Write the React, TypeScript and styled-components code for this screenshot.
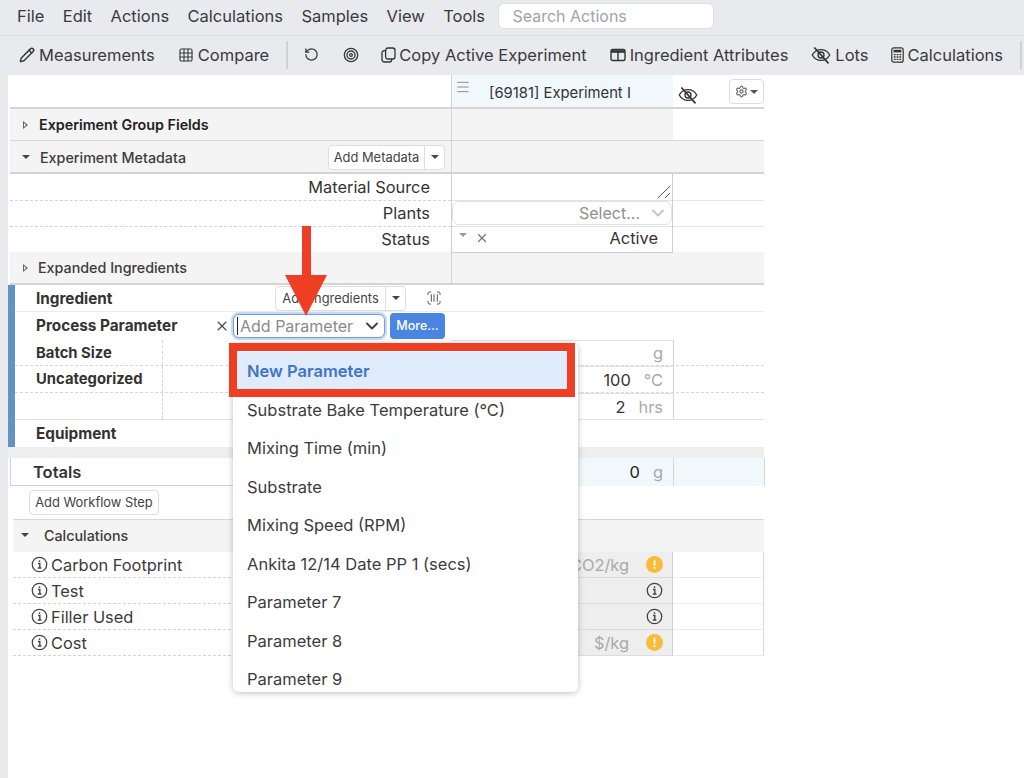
import React from 'react';
import styled, { createGlobalStyle } from 'styled-components';
import {
  ChevronDown,
  Grid3x3,
  Menu,
  Pencil,
  RotateCcw,
  ScanBarcode,
  Settings,
  Target,
  X,
} from 'lucide-react';

const GlobalStyle = createGlobalStyle`
  html, body {
    margin: 0;
    padding: 0;
    background: #fff;
    font-family: Inter, "Liberation Sans", sans-serif;
    color: #333;
  }
  * { box-sizing: border-box; }
`;

//Page frame
const Page = styled.div`
  position: relative;
  width: 1024px;
  height: 778px;
  overflow: hidden;
`;

const MenuBar = styled.div`
  height: 36px;
  background: #e9eaee;
  border-bottom: 1px solid #dddee2;
  display: flex;
  align-items: center;
  padding: 0 0 3px 17px;
  gap: 18.4px;
  font-size: 16.5px;
  color: #3a3a3c;
`;

const SearchBox = styled.div`
  width: 216px;
  height: 26px;
  margin-left: -5px;
  background: #fff;
  border: 1px solid #dfe0e3;
  border-radius: 6px;
  color: #a3a3a6;
  font-size: 16px;
  line-height: 24px;
  padding-left: 13px;
`;

const Toolbar = styled.div`
  height: 39px;
  padding-bottom: 2px;
  background: #e9eaee;
  display: flex;
  align-items: center;
  font-size: 16.5px;
  color: #3a3a3c;
`;

const ToolItem = styled.div<{ $left: number; $gap?: number }>`
  display: flex;
  align-items: center;
  gap: ${(p) => p.$gap ?? 4}px;
  margin-left: ${(p) => p.$left}px;
  white-space: nowrap;
`;

const ToolDivider = styled.div<{ $left: number }>`
  width: 2px;
  height: 28px;
  background: #cfd0d4;
  margin-left: ${(p) => p.$left}px;
`;

const Body = styled.div`
  display: flex;
  height: 703px;
`;

const LeftStrip = styled.div`
  width: 8px;
  background: #e9eaee;
`;

const Sheet = styled.div`
  width: 756px;
  display: flex;
  flex-direction: column;
`;

//Rows of the sheet
const Row = styled.div<{ $h: number; $line?: string }>`
  display: grid;
  grid-template-columns: 441px 222px 91px;
  margin-left: 2px;
  height: ${(p) => p.$h}px;
  border-bottom: ${(p) => p.$line || '1px solid #d6d6d6'};
`;

const GroupCell = styled.div<{ $gray?: boolean; $divider?: boolean; $top?: boolean; $drop?: number }>`
  display: flex;
  align-items: center;
  background: ${(p) => (p.$gray ? '#f4f4f4' : 'transparent')};
  border-left: ${(p) => (p.$divider ? '1px solid #d3d3d3' : 'none')};
  border-top: ${(p) => (p.$top ? '1px solid #d8d8d8' : 'none')};
  padding-bottom: ${(p) => (p.$top ? 2 : 0)}px;
  padding-top: ${(p) => p.$drop || 0}px;
`;

const HeaderExperiment = styled.div`
  display: flex;
  align-items: center;
  background: #f0f8fc;
  border-left: 1px solid #d3d3d3;
  font-size: 14.8px;
  color: #333;
  position: relative;
  padding: 3px 0 0 37px;
`;

const DragHandle = styled.span`
  position: absolute;
  left: 3px;
  top: 4px;
  color: #8c8c8c;
  display: flex;
`;

const HeaderTools = styled.div`
  display: flex;
  align-items: center;
  padding-left: 5px;
  justify-content: space-between;
`;

const HeaderEye = styled.span`
  display: flex;
  margin-top: 7px;
`;

const GearButton = styled.div`
  width: 35px;
  height: 25px;
  margin-top: 1px;
  background: #fff;
  border: 1px solid #dcdcdc;
  border-radius: 4px;
  display: flex;
  align-items: center;
  justify-content: center;
  gap: 2px;
  color: #666;
`;

const Caret = styled.span<{ $color?: string }>`
  width: 0;
  height: 0;
  border-left: 4px solid transparent;
  border-right: 4px solid transparent;
  border-top: 4px solid ${(p) => p.$color || '#444'};
`;

const Triangle = styled.span`
  width: 0;
  height: 0;
  border-top: 4px solid transparent;
  border-bottom: 4px solid transparent;
  border-left: 5px solid #666;
  position: relative;
  &::after {
    content: '';
    position: absolute;
    left: -4px;
    top: -2px;
    border-top: 2px solid transparent;
    border-bottom: 2px solid transparent;
    border-left: 2.5px solid #f4f4f4;
  }
`;

const GroupTitle = styled.span<{ $weight?: number; $left: number }>`
  font-size: 14.3px;
  font-weight: ${(p) => p.$weight || 500};
  color: ${(p) => (p.$weight === 600 ? '#222' : '#3c3c3c')};
  margin-left: ${(p) => p.$left}px;
`;

const Disclosure = styled.span<{ $left: number }>`
  display: flex;
  margin-left: ${(p) => p.$left}px;
`;

const SplitButton = styled.div<{ $left?: number; $right?: number }>`
  display: flex;
  height: 25px;
  margin-left: ${(p) => (p.$left !== undefined ? `${p.$left}px` : 'auto')};
  margin-right: ${(p) => p.$right || 0}px;
  background: #fff;
  border: 1px solid #dedede;
  border-radius: 4px;
  font-size: 12.9px;
  color: #444;
`;

const SplitLabel = styled.span<{ $w: number }>`
  width: ${(p) => p.$w}px;
  display: flex;
  align-items: center;
  justify-content: center;
  white-space: nowrap;
  border-right: 1px solid #dedede;
`;

const SplitCaret = styled.span`
  flex: 1;
  display: flex;
  align-items: center;
  justify-content: center;
  width: 19px;
`;

const FieldLabel = styled.div`
  text-align: right;
  font-size: 16.4px;
  line-height: 26px;
  padding-right: 21px;
  color: #333;
  border-bottom: 1px dashed #d4d4d4;
`;

const FieldCell = styled.div<{ $last?: boolean }>`
  position: relative;
  border-left: 1px solid #cfcfcf;
  border-right: 1px solid #cfcfcf;
  border-bottom: 1px solid ${(p) => (p.$last ? '#cfcfcf' : '#e2e2e2')};
  display: flex;
  align-items: center;
  font-size: 16.4px;
`;

const FieldRest = styled.div`
  border-bottom: 1px solid #e6e6e6;
`;

const ResizeGrip = styled.svg`
  position: absolute;
  right: 1px;
  bottom: 1px;
`;

const SelectShell = styled.div`
  width: 221px;
  height: 24px;
  border: 1px solid #dfe3e8;
  border-radius: 7px;
  display: flex;
  align-items: center;
  justify-content: flex-end;
  gap: 8px;
  padding-right: 3px;
  font-size: 16px;
  color: #8f8f8f;
`;

const StatusValue = styled.span`
  margin-left: auto;
  margin-right: 14px;
  margin-top: -2px;
  color: #333;
`;

const StatusCaret = styled.span`
  margin: -8px 0 0 7px;
  display: flex;
`;

const StatusClear = styled.span`
  margin: -2px 0 0 8px;
  display: flex;
  color: #777;
`;

//Ingredient block with the blue bar
const IngredientBlock = styled.div`
  border-left: 7px solid #6293c6;
  height: 162px;
  display: flex;
  flex-direction: column;
`;

const PlainRow = styled.div<{ $h: number; $line?: string; $drop?: number }>`
  height: ${(p) => p.$h}px;
  display: flex;
  align-items: center;
  padding-left: 21px;
  padding-top: ${(p) => p.$drop || 0}px;
  border-bottom: 1px solid ${(p) => p.$line || '#ececec'};
`;

const BoldLabel = styled.span<{ $w?: number; $size?: number }>`
  font-size: ${(p) => p.$size || 15.3}px;
  font-weight: 700;
  color: #333;
  width: ${(p) => (p.$w ? `${p.$w}px` : 'auto')};
  flex-shrink: 0;
  white-space: nowrap;
`;

const ClearButton = styled.span`
  display: flex;
  flex-shrink: 0;
  color: #444;
  margin-left: -8px;
  margin-right: 3px;
`;

const ParamSelect = styled.div`
  width: 152px;
  height: 24px;
  border: 1px solid #6f9fe0;
  border-radius: 6px;
  box-shadow: 0 0 0 2px #c8daf3;
  display: flex;
  align-items: center;
  padding: 0 2px 0 3px;
  background: #fff;
  font-size: 16px;
  color: #8a8a8a;
`;

const TextCaret = styled.span`
  width: 1px;
  height: 18px;
  background: #222;
  margin-right: 2px;
`;

const ParamChevron = styled.span`
  margin-left: auto;
  display: flex;
  color: #444;
`;

const MoreButton = styled.div`
  width: 55px;
  height: 26px;
  margin-left: 5px;
  background: #4a86e0;
  border-radius: 4px;
  color: #fff;
  font-size: 12.5px;
  font-weight: 500;
  display: flex;
  align-items: center;
  justify-content: center;
`;

const ScanIcon = styled.span`
  display: flex;
  margin-left: 20px;
  color: #555;
`;

const DataRow = styled.div<{ $h: number; $solid?: boolean }>`
  height: ${(p) => p.$h}px;
  display: grid;
  grid-template-columns: 148px 288px 222px 91px;
  border-bottom: 1px ${(p) => (p.$solid ? 'solid #e2e2e2' : 'dashed #d8d8d8')};
`;

const DataLabel = styled.div`
  padding: 2px 0 0 21px;
  border-right: 1px dashed #d4d4d4;
`;

const DataValue = styled.div`
  display: flex;
  justify-content: flex-end;
  align-items: center;
  gap: 13px;
  padding-right: 10px;
  font-size: 16.4px;
  border-top: 1px solid #e2e2e2;
  color: #333;
`;

const Unit = styled.span`
  color: #a9a9a9;
`;

const DataRest = styled.div`
  border-left: 1px solid #d6d6d6;
`;

const SectionGap = styled.div`
  height: 11px;
  background: #eeeeee;
`;

const TotalsRow = styled.div`
  margin-left: 2px;
  height: 28px;
  display: grid;
  grid-template-columns: 441px 222px 91px;
  border-left: 1px solid #d6d6d6;
  border-bottom: 1px solid #d0d0d0;
`;

const TotalsLabel = styled.div`
  padding-left: 22px;
  font-size: 16.5px;
  font-weight: 600;
  line-height: 28px;
`;

const TotalsValue = styled(DataValue)`
  background: #f0f8fc;
  border-top: none;
  border-right: 1px solid #d6d6d6;
  color: #222;
  gap: 13px;
`;

const TotalsRest = styled.div`
  background: #f0f8fc;
  border-right: 1px solid #d6d6d6;
`;

const WorkflowRow = styled.div`
  height: 33px;
  padding: 4px 0 0 21px;
`;

const WorkflowButton = styled.div`
  width: 130px;
  height: 25px;
  border: 1px solid #dedede;
  border-radius: 4px;
  background: #fff;
  font-size: 12.9px;
  color: #444;
  display: flex;
  align-items: center;
  justify-content: center;
  white-space: nowrap;
`;

const CalcRow = styled.div<{ $h?: number }>`
  margin-left: 5px;
  height: ${(p) => p.$h || 26}px;
  display: grid;
  grid-template-columns: 438px 222px 91px;
`;

const CalcLabel = styled.div`
  display: flex;
  align-items: center;
  gap: 3px;
  padding: 0 0 0 18px;
  font-size: 16.4px;
  color: #3a3a3a;
  border-bottom: 1px dashed #d4d4d4;
`;

const CalcValue = styled.div`
  display: flex;
  justify-content: flex-end;
  align-items: center;
  gap: 17px;
  padding-right: 9px;
  background: #eeeeee;
  border-bottom: 1px solid #dcdcdc;
  border-right: 1px solid #d0d0d0;
  font-size: 16.4px;
  color: #a9a9a9;
`;

const CalcRest = styled.div`
  border-bottom: 1px solid #ececec;
  border-right: 1px solid #d8d8d8;
`;

//Dropdown and the annotation drawn over the page
const Dropdown = styled.div`
  position: absolute;
  left: 233px;
  top: 343px;
  width: 345px;
  height: 349px;
  padding-top: 9px;
  background: #fff;
  border-radius: 6px;
  box-shadow: 0 1px 6px rgba(0, 0, 0, 0.25);
  overflow: hidden;
`;

const DropdownItem = styled.div<{ $active?: boolean }>`
  height: 38.5px;
  margin-right: ${(p) => (p.$active ? 8 : 0)}px;
  padding-left: 14px;
  line-height: 38.5px;
  font-size: 16.5px;
  white-space: nowrap;
  font-weight: ${(p) => (p.$active ? 600 : 400)};
  color: ${(p) => (p.$active ? '#3f74c8' : '#3c3c3c')};
  background: ${(p) => (p.$active ? '#e0ebfb' : 'transparent')};
`;

const Highlight = styled.div`
  position: absolute;
  left: 229px;
  top: 343px;
  width: 346px;
  height: 54px;
  border: 8px solid #ee3f24;
`;

const ArrowMark = styled.svg`
  position: absolute;
  left: 285px;
  top: 226px;
`;

const EyeOff = ({ size }: { size: number }) => (
  <svg width={size} height={size} viewBox="0 0 24 24" fill="none" stroke="#333" strokeWidth="1.6">
    <path d="M1.5 12C4 7.5 8 5.5 12 5.5S20 7.5 22.5 12C20 16.5 16 18.5 12 18.5S4 16.5 1.5 12Z" />
    <circle cx="12" cy="12" r="3.6" />
    <path d="M4 3l17 19" strokeWidth="2" />
  </svg>
);

const CopyIcon = () => (
  <svg width="15" height="16" viewBox="0 0 15 16" fill="none" stroke="#333" strokeWidth="1.3">
    <rect x="4.6" y="1" width="9.4" height="11" rx="2.2" />
    <path d="M4.6 3.6H3.2A2.2 2.2 0 0 0 1 5.8v6.8A2.4 2.4 0 0 0 3.4 15h5.2a2 2 0 0 0 2-2v-1" />
  </svg>
);

const ColumnsIcon = () => (
  <svg width="16" height="16" viewBox="0 0 16 16" fill="none" stroke="#333" strokeWidth="1.4">
    <rect x="1" y="2.5" width="14" height="11" rx="1.5" />
    <path d="M1 4.5h14" strokeWidth="2.6" />
    <path d="M8 4v9.5" />
  </svg>
);

const CalcIcon = () => (
  <svg width="13" height="16" viewBox="0 0 13 16" fill="none" stroke="#333" strokeWidth="1.2">
    <rect x="0.8" y="0.8" width="11.4" height="14.4" rx="2" />
    <rect x="2.6" y="2.8" width="7.8" height="2.6" fill="#333" stroke="none" />
    <path d="M2.8 7.6h1.8M5.6 7.6h1.8M8.4 7.6h1.8M2.8 10h1.8M5.6 10h1.8M8.4 10h1.8M2.8 12.4h1.8M5.6 12.4h1.8M8.4 12.4h1.8" strokeWidth="1.3" />
  </svg>
);

const InfoIcon = () => (
  <svg width="17" height="17" viewBox="0 0 16 16" fill="none" stroke="#444" strokeWidth="1.2">
    <circle cx="8" cy="8" r="6.8" />
    <path d="M6.6 7h1.7v4.2M6.4 11.3h3.4" strokeWidth="1.3" />
    <circle cx="8" cy="4.8" r="0.9" fill="#444" stroke="none" />
  </svg>
);

const WarnIcon = () => (
  <svg width="17" height="17" viewBox="0 0 16 16">
    <circle cx="8" cy="8" r="8" fill="#f6bd3b" />
    <rect x="7.2" y="3.6" width="1.6" height="5.6" rx="0.8" fill="#fff" />
    <circle cx="8" cy="11.4" r="1" fill="#fff" />
  </svg>
);

const parameters = [
  'New Parameter',
  'Substrate Bake Temperature (°C)',
  'Mixing Time (min)',
  'Substrate',
  'Mixing Speed (RPM)',
  'Ankita 12/14 Date PP 1 (secs)',
  'Parameter 7',
  'Parameter 8',
  'Parameter 9',
];

const menus = ['File', 'Edit', 'Actions', 'Calculations', 'Samples', 'View', 'Tools'];

const App = () => {
  return (
    <Page>
      <GlobalStyle />

      <MenuBar>
        {menus.map((menu) => (
          <span key={menu}>{menu}</span>
        ))}
        <SearchBox>Search Actions</SearchBox>
      </MenuBar>

      <Toolbar>
        <ToolItem $left={19}>
          <Pencil size={16} strokeWidth={2.2} />
          Measurements
        </ToolItem>
        <ToolItem $left={23}>
          <Grid3x3 size={16} strokeWidth={1.7} />
          Compare
        </ToolItem>
        <ToolDivider $left={17} />
        <ToolItem $left={16}>
          <RotateCcw size={15} />
        </ToolItem>
        <ToolItem $left={24}>
          <Target size={16} />
        </ToolItem>
        <ToolItem $left={22} $gap={3}>
          <CopyIcon />
          Copy Active Experiment
        </ToolItem>
        <ToolItem $left={23}>
          <ColumnsIcon />
          Ingredient Attributes
        </ToolItem>
        <ToolItem $left={23}>
          <EyeOff size={20} />
          Lots
        </ToolItem>
        <ToolItem $left={22}>
          <CalcIcon />
          Calculations
        </ToolItem>
        <ToolDivider $left={17} />
      </Toolbar>

      <Body>
        <LeftStrip />
        <Sheet>
          <Row $h={34} $line="2px solid #d4d4d4">
            <div />
            <HeaderExperiment>
              <DragHandle>
                <Menu size={16} strokeWidth={1.5} />
              </DragHandle>
              [69181] Experiment I
            </HeaderExperiment>
            <HeaderTools>
              <HeaderEye>
                <EyeOff size={20} />
              </HeaderEye>
              <GearButton>
                <Settings size={13} />
                <Caret $color="#555" />
              </GearButton>
            </HeaderTools>
          </Row>

          <Row $h={32}>
            <GroupCell $gray>
              <Disclosure $left={13}>
                <Triangle />
              </Disclosure>
              <GroupTitle $weight={600} $left={11}>
                Experiment Group Fields
              </GroupTitle>
            </GroupCell>
            <GroupCell $gray $divider />
            <div />
          </Row>

          <Row $h={33} $line="2px solid #d4d4d4">
            <GroupCell $gray $drop={1}>
              <Disclosure $left={12}>
                <Caret />
              </Disclosure>
              <GroupTitle $left={10}>Experiment Metadata</GroupTitle>
              <SplitButton $right={6}>
                <SplitLabel $w={96}>Add Metadata</SplitLabel>
                <SplitCaret>
                  <Caret />
                </SplitCaret>
              </SplitButton>
            </GroupCell>
            <GroupCell $gray $divider />
            <GroupCell $gray />
          </Row>

          <Row $h={26} $line="none">
            <FieldLabel>Material Source</FieldLabel>
            <FieldCell>
              <ResizeGrip width="14" height="14" viewBox="0 0 14 14" stroke="#555" strokeWidth="1">
                <path d="M1 13L13 1M8 13l5-5" />
              </ResizeGrip>
            </FieldCell>
            <FieldRest />
          </Row>
          <Row $h={26} $line="none">
            <FieldLabel>Plants</FieldLabel>
            <FieldCell>
              <SelectShell>
                Select...
                <ChevronDown size={20} color="#c4c4c4" strokeWidth={2.4} />
              </SelectShell>
            </FieldCell>
            <FieldRest />
          </Row>
          <Row $h={26} $line="none">
            <FieldLabel>Status</FieldLabel>
            <FieldCell $last>
              <StatusCaret>
                <Caret $color="#999" />
              </StatusCaret>
              <StatusClear>
                <X size={14} strokeWidth={2.2} />
              </StatusClear>
              <StatusValue>Active</StatusValue>
            </FieldCell>
            <FieldRest />
          </Row>

          <Row $h={33} $line="2px solid #d4d4d4">
            <GroupCell $gray>
              <Disclosure $left={13}>
                <Triangle />
              </Disclosure>
              <GroupTitle $left={10}>Expanded Ingredients</GroupTitle>
            </GroupCell>
            <GroupCell $gray $divider />
            <GroupCell $gray />
          </Row>

          <IngredientBlock>
            <PlainRow $h={27}>
              <BoldLabel $w={239}>Ingredient</BoldLabel>
              <SplitButton $left={0}>
                <SplitLabel $w={110}>Add Ingredients</SplitLabel>
                <SplitCaret>
                  <Caret />
                </SplitCaret>
              </SplitButton>
              <ScanIcon>
                <ScanBarcode size={16} strokeWidth={1.5} />
              </ScanIcon>
            </PlainRow>
            <PlainRow $h={28} $line="transparent">
              <BoldLabel $w={186}>Process Parameter</BoldLabel>
              <ClearButton>
                <X size={16} strokeWidth={1.6} />
              </ClearButton>
              <ParamSelect>
                <TextCaret />
                Add Parameter
                <ParamChevron>
                  <ChevronDown size={20} strokeWidth={2.4} />
                </ParamChevron>
              </ParamSelect>
              <MoreButton>More...</MoreButton>
            </PlainRow>
            <DataRow $h={26}>
              <DataLabel>
                <BoldLabel $size={14.8}>Batch Size</BoldLabel>
              </DataLabel>
              <div />
              <DataValue>
                <Unit>g</Unit>
              </DataValue>
              <DataRest />
            </DataRow>
            <DataRow $h={27}>
              <DataLabel>
                <BoldLabel $size={14.8}>Uncategorized</BoldLabel>
              </DataLabel>
              <div />
              <DataValue>
                100
                <Unit>°C</Unit>
              </DataValue>
              <DataRest />
            </DataRow>
            <DataRow $h={27} $solid>
              <DataLabel />
              <div />
              <DataValue>
                2
                <Unit>hrs</Unit>
              </DataValue>
              <DataRest />
            </DataRow>
            <PlainRow $h={27} $line="transparent" $drop={1}>
              <BoldLabel>Equipment</BoldLabel>
            </PlainRow>
          </IngredientBlock>

          <SectionGap />

          <TotalsRow>
            <TotalsLabel>Totals</TotalsLabel>
            <TotalsValue>
              0<Unit>g</Unit>
            </TotalsValue>
            <TotalsRest />
          </TotalsRow>

          <WorkflowRow>
            <WorkflowButton>Add Workflow Step</WorkflowButton>
          </WorkflowRow>

          <CalcRow $h={33}>
            <GroupCell $gray $top>
              <Disclosure $left={8}>
                <Caret />
              </Disclosure>
              <GroupTitle $left={15}>Calculations</GroupTitle>
            </GroupCell>
            <GroupCell $gray $top />
            <GroupCell $gray $top />
          </CalcRow>

          <CalcRow>
            <CalcLabel>
              <InfoIcon />
              Carbon Footprint
            </CalcLabel>
            <CalcValue>
              CO2/kg
              <WarnIcon />
            </CalcValue>
            <CalcRest />
          </CalcRow>
          <CalcRow>
            <CalcLabel>
              <InfoIcon />
              Test
            </CalcLabel>
            <CalcValue>
              <InfoIcon />
            </CalcValue>
            <CalcRest />
          </CalcRow>
          <CalcRow>
            <CalcLabel>
              <InfoIcon />
              Filler Used
            </CalcLabel>
            <CalcValue>
              <InfoIcon />
            </CalcValue>
            <CalcRest />
          </CalcRow>
          <CalcRow>
            <CalcLabel>
              <InfoIcon />
              Cost
            </CalcLabel>
            <CalcValue>
              $/kg
              <WarnIcon />
            </CalcValue>
            <CalcRest />
          </CalcRow>
        </Sheet>
      </Body>

      <Dropdown>
        {parameters.map((parameter, index) => (
          <DropdownItem key={parameter} $active={index === 0}>
            {parameter}
          </DropdownItem>
        ))}
      </Dropdown>

      <Highlight />

      <ArrowMark width="42" height="90" viewBox="0 0 42 90">
        <path d="M17 0h9v49h16L21 90 0 49h17z" fill="#ee3f24" />
      </ArrowMark>
    </Page>
  );
};

export default App;
